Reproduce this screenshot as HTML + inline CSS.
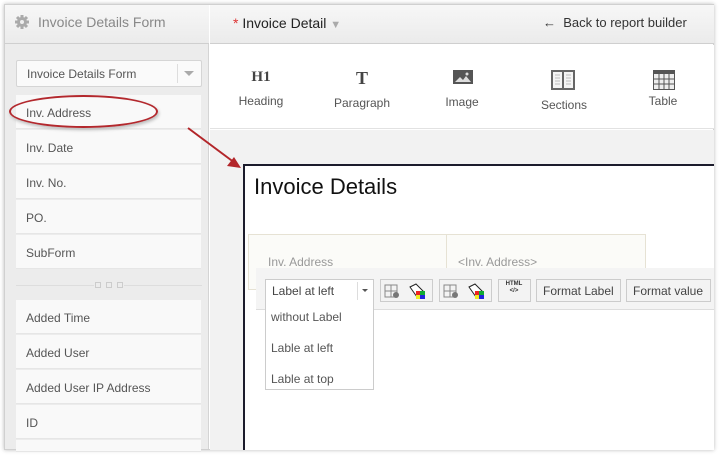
<!DOCTYPE html>
<html><head><meta charset="utf-8"><style>
*{box-sizing:border-box;margin:0;padding:0}
body{width:720px;height:455px;background:#fff;font-family:"Liberation Sans",sans-serif;position:relative;overflow:hidden;font-size:12px;color:#555}
.a{position:absolute}
.item{position:absolute;left:16px;width:185px;height:34px;background:#f9f9f9;border-bottom:1px solid #e6e6e6;padding:11px 0 0 10px;color:#555;font-size:12px}
.tb{position:absolute;text-align:center;color:#555;font-size:12px}
.btn{position:absolute;top:279px;height:23px;border:1px solid #ccc;background:#f3f3f3;font-size:12px;color:#444;padding:4px 6px}
</style></head><body>
<div class="a" style="left:4px;top:4px;width:710px;height:446px;border:1px solid #d0d0d0;box-shadow:0 0 4px #bbb"></div>
<!-- left panel -->
<div class="a" style="left:5px;top:5px;width:204px;height:444px;background:#ececec;border-right:1px solid #d4d4d4"></div>
<div class="a" style="left:5px;top:5px;width:204px;height:39px;background:linear-gradient(#f7f7f7,#ebebeb);border-bottom:1px solid #cfcfcf"></div>
<svg class="a" style="left:15px;top:15px" width="14" height="14" viewBox="0 0 14 14"><circle cx="7" cy="7" r="5" fill="#aaa"/><g stroke="#aaa" stroke-width="3"><path d="M7 0v14M0 7h14M2 2l10 10M12 2L2 12"/></g><circle cx="7" cy="7" r="2" fill="#eee"/></svg>
<div class="a" style="left:38px;top:14px;font-size:14px;color:#888">Invoice Details Form</div>
<div class="a" style="left:16px;top:60px;width:186px;height:27px;background:#fafafa;border:1px solid #d5d5d5;border-radius:2px;padding:6px 0 0 10px;font-size:12px;color:#555">Invoice Details Form</div>
<div class="a" style="left:177px;top:64px;width:1px;height:19px;background:#ddd"></div>
<div class="a" style="left:184px;top:71px;border:5px solid transparent;border-top:5px solid #aaa"></div>
<div class="item" style="top:95px">Inv. Address</div>
<div class="item" style="top:130px">Inv. Date</div>
<div class="item" style="top:165px">Inv. No.</div>
<div class="item" style="top:200px">PO.</div>
<div class="item" style="top:235px">SubForm</div>
<div class="a" style="left:16px;top:285px;width:186px;height:1px;background:#ddd"></div>
<div class="a" style="left:94px;top:282px;width:30px;height:6px;background:#ececec"></div>
<div class="a" style="left:95px;top:282px;width:6px;height:6px;border:1px solid #ccc"></div>
<div class="a" style="left:106px;top:282px;width:6px;height:6px;border:1px solid #ccc"></div>
<div class="a" style="left:117px;top:282px;width:6px;height:6px;border:1px solid #ccc"></div>
<div class="item" style="top:300px">Added Time</div>
<div class="item" style="top:335px">Added User</div>
<div class="item" style="top:370px">Added User IP Address</div>
<div class="item" style="top:405px">ID</div>
<div class="item" style="top:440px;height:10px"></div>
<div class="a" style="left:9px;top:95px;width:149px;height:33px;border:2px solid #b3282d;border-radius:50%/50%;box-shadow:1px 2px 3px #bbb"></div>
<!-- right header -->
<div class="a" style="left:210px;top:5px;width:504px;height:39px;background:linear-gradient(#f7f7f7,#ebebeb);border-bottom:1px solid #cfcfcf"></div>
<div class="a" style="left:233px;top:15px;font-size:14px;color:#222"><span style="color:#d33">*</span> Invoice Detail <span style="color:#aaa;font-size:11px">&#9660;</span></div>
<div class="a" style="left:543px;top:15px;font-size:13px;color:#333">&larr;&nbsp; Back to report builder</div>
<!-- toolbar -->
<div class="a" style="left:210px;top:45px;width:504px;height:84px;background:#fff;border-bottom:1px solid #e2e2e2"></div>
<div class="tb" style="left:238px;top:69px;width:46px;font-family:'Liberation Serif',serif;font-weight:bold;font-size:15px;color:#444">H1</div>
<div class="tb" style="left:238px;top:94px;width:46px">Heading</div>
<div class="tb" style="left:332px;top:68px;width:60px;font-family:'Liberation Serif',serif;font-weight:bold;font-size:18px;color:#444">T</div>
<div class="tb" style="left:332px;top:96px;width:60px">Paragraph</div>
<svg class="a" style="left:453px;top:70px" width="20" height="14"><rect width="20" height="14" fill="#555"/><path d="M2 12l5-5 3 3 3-4 5 6z" fill="#ddd"/><circle cx="14" cy="4" r="1.5" fill="#ddd"/></svg>
<div class="tb" style="left:440px;top:95px;width:44px">Image</div>
<svg class="a" style="left:551px;top:70px" width="24" height="20"><rect x="1" y="1" width="22" height="18" fill="#f4f4f4" stroke="#666" stroke-width="2"/><path d="M12 1v18" stroke="#666" stroke-width="2"/><path d="M4 5h5M4 8h5M4 11h5M4 14h5M15 5h5M15 8h5M15 11h5M15 14h5" stroke="#bbb"/></svg>
<div class="tb" style="left:536px;top:98px;width:56px">Sections</div>
<svg class="a" style="left:653px;top:70px" width="22" height="20"><rect x="0" y="0" width="22" height="20" fill="#555"/><rect x="1" y="4" width="20" height="15" fill="#eee"/><path d="M6 4v15M11 4v15M16 4v15M1 9h20M1 14h20" stroke="#555"/></svg>
<div class="tb" style="left:640px;top:94px;width:46px">Table</div>
<!-- canvas -->
<div class="a" style="left:210px;top:130px;width:504px;height:320px;background:#f2f2f2"></div>
<svg class="a" style="left:185px;top:125px" width="60" height="50"><path d="M3 3L50 38" stroke="#b3262a" stroke-width="2"/><path d="M56 43L42 41 49 32z" fill="#b3262a"/></svg>
<div class="a" style="left:243px;top:164px;width:471px;height:286px;background:#fff;border-top:2px solid #1c1c2c;border-left:2px solid #1c1c2c"></div>
<div class="a" style="left:254px;top:174px;font-size:22px;color:#111">Invoice Details</div>
<div class="a" style="left:248px;top:234px;width:398px;height:56px;background:#fbfbf8;border:1px solid #e6e2d4"></div>
<div class="a" style="left:446px;top:234px;width:1px;height:40px;background:#e6e2d4"></div>
<div class="a" style="left:268px;top:255px;color:#999;font-size:12px">Inv. Address</div>
<div class="a" style="left:458px;top:255px;color:#999;font-size:12px">&lt;Inv. Address&gt;</div>
<div class="a" style="left:256px;top:268px;width:458px;height:42px;background:#f4f4f4;border-bottom:1px solid #ddd"></div>
<div class="a" style="left:265px;top:279px;width:109px;height:23px;background:#fff;border:1px solid #ccc;padding:4px 0 0 6px;font-size:12px;color:#444">Label at left</div>
<div class="a" style="left:357px;top:282px;width:1px;height:18px;background:#ddd"></div>
<div class="a" style="left:362px;top:289px;border:3px solid transparent;border-top:3px solid #555"></div>
<div class="btn" style="left:380px;width:53px"></div>
<div class="btn" style="left:439px;width:53px"></div>
<div class="btn" style="left:498px;width:33px"></div>
<svg class="a" style="left:384px;top:283px" width="45" height="16"><rect x="1" y="2" width="12" height="12" fill="none" stroke="#888"/><path d="M7 2v12M1 8h12" stroke="#888"/><circle cx="12" cy="12" r="3" fill="#777"/><path d="M26 4l6-3 7 7-6 6z" fill="#fff" stroke="#222"/><rect x="32" y="8" width="9" height="8" fill="#1a3"/><rect x="32" y="8" width="4" height="4" fill="#e22"/><rect x="36" y="12" width="5" height="4" fill="#22d"/><rect x="32" y="12" width="4" height="4" fill="#ee2"/></svg>
<svg class="a" style="left:443px;top:283px" width="45" height="16"><rect x="1" y="2" width="12" height="12" fill="none" stroke="#888"/><path d="M7 2v12M1 8h12" stroke="#888"/><circle cx="12" cy="12" r="3" fill="#777"/><path d="M26 4l6-3 7 7-6 6z" fill="#fff" stroke="#222"/><rect x="32" y="8" width="9" height="8" fill="#1a3"/><rect x="32" y="8" width="4" height="4" fill="#e22"/><rect x="36" y="12" width="5" height="4" fill="#22d"/><rect x="32" y="12" width="4" height="4" fill="#ee2"/></svg>
<div class="a" style="left:503px;top:281px;font-size:6px;color:#333;font-weight:bold;line-height:7px;text-align:center;width:22px">HTML<br>&lt;/&gt;</div>
<div class="btn" style="left:536px;width:85px">Format Label</div>
<div class="btn" style="left:626px;width:85px">Format value</div>
<div class="a" style="left:265px;top:301px;width:109px;height:89px;background:#fff;border:1px solid #ccc;border-top:none"></div>
<div class="a" style="left:271px;top:310px;font-size:12px;color:#555">without Label</div>
<div class="a" style="left:271px;top:341px;font-size:12px;color:#555">Lable at left</div>
<div class="a" style="left:271px;top:372px;font-size:12px;color:#555">Lable at top</div>
</body></html>
